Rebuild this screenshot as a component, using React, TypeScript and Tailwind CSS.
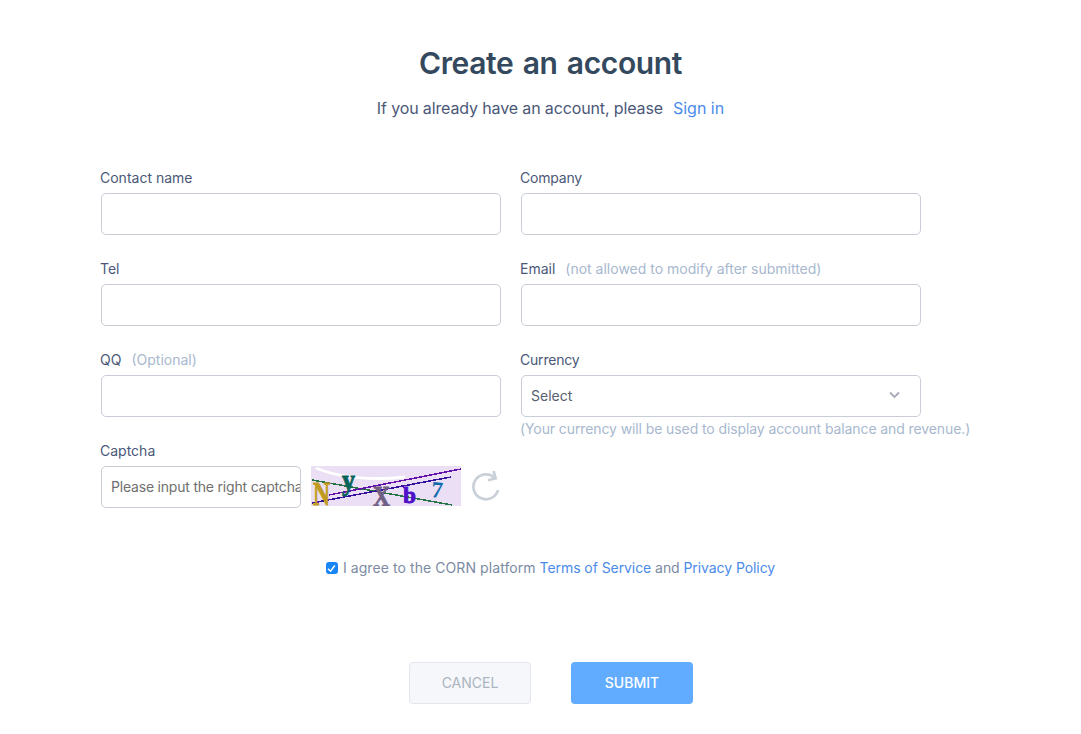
import type { ReactNode } from "react";

const inputClass =
  "block h-[42px] w-[400px] rounded-[5px] border border-[#c8cdd6] bg-white px-2.5 text-sm text-[#5a6070] outline-none";

function Field({ label, hint, tight, children }: { label: string; hint?: ReactNode; tight?: boolean; children?: ReactNode }) {
  return (
    <div className="flex h-[91px] flex-col">
      <label className="-ml-px flex h-[25px] items-start text-sm leading-5 text-[#4b5878]">
        <span className={tight ? "tracking-[-0.2px]" : ""}>{label}</span>
        {hint}
      </label>
      {children ?? <input className={inputClass} />}
    </div>
  );
}

function Captcha() {
  return (
    <svg width="150" height="40" viewBox="0 0 150 40" className="ml-2.5 shrink-0" role="img" aria-label="Captcha">
      <rect width="150" height="40" fill="#eadff5" />
      <path d="M5 2C25 11 60 15 94 11" fill="none" stroke="#fff" strokeWidth="3" />
      <g fill="none" strokeWidth="1.500" shapeRendering="crispEdges">
        <path d="M1 14L141 39" stroke="#267345" />
        <path d="M18 29L150 3" stroke="#6512ad" />
        <path d="M1 37L140 11" stroke="#3511a0" />
      </g>
      <g strokeWidth="0.900">
        <text x="2" y="38.500" fontFamily="Liberation Serif, serif" fontSize="33" fontWeight="700" fill="#c09a20" stroke="#c09a20" textLength="17" lengthAdjust="spacingAndGlyphs">N</text>
        <text x="31" y="23.500" fontFamily="Liberation Serif, serif" fontSize="29" fontWeight="700" fill="#08645a" stroke="#08645a" textLength="13" lengthAdjust="spacingAndGlyphs">y</text>
        <text x="62" y="39.500" fontFamily="Liberation Serif, serif" fontSize="29" fontWeight="700" fill="#716083" stroke="#716083" textLength="17" lengthAdjust="spacingAndGlyphs">X</text>
        <text x="92" y="36.500" fontFamily="Liberation Serif, serif" fontSize="24" fontWeight="700" fill="#5010ca" stroke="#5010ca" textLength="13" lengthAdjust="spacingAndGlyphs">b</text>
        <text x="120.500" y="31.500" fontFamily="Liberation Serif, serif" fontSize="23" fontWeight="700" fill="#126aac" transform="rotate(5 126 24)">7</text>
      </g>
    </svg>
  );
}

export default function App() {
  return (
    <main className="h-[734px] w-full overflow-hidden bg-white pl-[101px] font-['Inter','Liberation_Sans',sans-serif]">
      <div className="w-[900px]">
        <header className="-ml-px flex h-[168px] flex-col items-center pt-[42px]">
          <h1 className="text-[30px] font-semibold leading-[42px] tracking-[-0.35px] text-[#34495e] [word-spacing:2px]">Create an account</h1>
          <p className="mt-3 flex gap-2.5 text-base leading-6 text-[#4b5878]">
            <span className="tracking-[-0.13px]">If you already have an account, please</span>
            <a href="#" className="text-[#4b8bea]">Sign in</a>
          </p>
        </header>

        <form>
          <div className="grid grid-cols-[400px_400px] gap-x-5">
            <Field label="Contact name" />
            <Field label="Company" tight />
            <Field label="Tel" />
            <Field label="Email" hint={<span className="ml-2.5 text-[#a8b8ce]">(not allowed to modify after submitted)</span>} />
            <Field label="QQ" hint={<span className="ml-2.5 text-[#a8b8ce]">(Optional)</span>} />
            <Field label="Currency" tight>
              <button type="button" className="flex h-[42px] w-[400px] shrink-0 items-center justify-between rounded-[5px] border border-[#c8cdd6] pl-[9px] pr-5 text-sm text-[#566070]">
                <span>Select</span>
                <svg width="11" height="8" viewBox="0 0 11 8" className="-mt-0.5" fill="none" stroke="#a5acb5" strokeWidth="1.800">
                  <path d="M1 1.500L5.500 6L10 1.500" />
                </svg>
              </button>
              <span className="-ml-px mt-0.5 whitespace-nowrap text-sm leading-5 tracking-[-0.1px] text-[#a8b8ce]">
                (Your currency will be used to display account balance and revenue.)
              </span>
            </Field>
            <Field label="Captcha">
              <div className="flex">
                <input
                  className="h-[42px] w-[200px] shrink-0 rounded-[5px] border border-[#c8cdd6] bg-white pb-0.5 pl-[9px] text-sm tracking-[-0.2px] outline-none placeholder:text-[#707070]"
                  placeholder="Please input the right captcha"
                />
                <Captcha />
                <button type="button" aria-label="Refresh captcha" className="-mt-px ml-2.5">
                  <svg width="29" height="31" viewBox="0 0 29 31" fill="none" stroke="#c9d0d8" strokeWidth="2.700">
                    <path d="M24 7.200A12.500 12.500 0 1 0 27 19" />
                    <path d="M22.600 0L24.600 7.300L17 9.300" />
                  </svg>
                </button>
              </div>
            </Field>
          </div>

          <div className="-ml-px mt-[26px] flex h-5 items-center justify-center text-sm leading-5 text-[#7b8ba3]">
            <label className="flex items-center">
              <input type="checkbox" defaultChecked className="peer sr-only" />
              <span className="mr-[5px] flex size-3 items-center justify-center rounded-[3px] bg-[#1985f5]">
                <svg width="9" height="9" viewBox="0 0 9 9" fill="none" stroke="#fff" strokeWidth="1.500">
                  <path d="M1 4.800L3.500 7.200L7.800 1.500" />
                </svg>
              </span>
              <span className="tracking-[0.08px]">I agree to the CORN platform</span>
            </label>
            <span className="whitespace-pre tracking-[-0.07px]"> <a href="#" className="text-[#4b8bea]">Terms of Service</a> and <a href="#" className="text-[#4b8bea]">Privacy Policy</a></span>
          </div>

          <div className="mt-[84px] flex justify-center gap-10">
            <button type="button" className="h-[42px] w-[122px] rounded-[4px] border border-[#e3e6ec] bg-[#f5f7fb] text-sm text-[#abb4c0]">CANCEL</button>
            <button type="button" className="h-[42px] w-[122px] rounded-[4px] bg-[#62acff] text-sm font-medium text-white">SUBMIT</button>
          </div>
        </form>
      </div>
    </main>
  );
}
